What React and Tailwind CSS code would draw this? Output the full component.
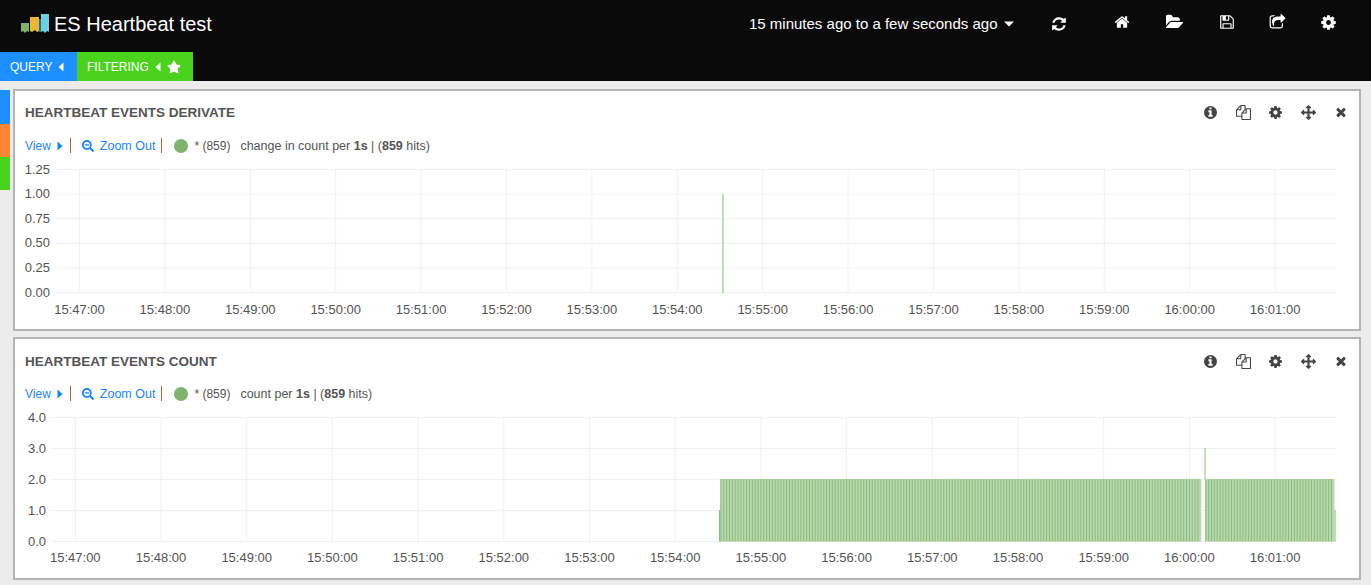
import React from "react";
import { FaSearchMinus, FaStar } from "react-icons/fa";

const XL = ["15:47:00","15:48:00","15:49:00","15:50:00","15:51:00","15:52:00","15:53:00","15:54:00","15:55:00","15:56:00","15:57:00","15:58:00","15:59:00","16:00:00","16:01:00"];

const P = {
  refresh: "M1639 1056q0 5-1 7-64 268-268 434.5t-478 166.5q-146 0-282.5-55t-243.5-157l-129 129q-19 19-45 19t-45-19-19-45v-448q0-26 19-45t45-19h448q26 0 45 19t19 45-19 45l-137 137q71 66 161 102t187 36q134 0 250-65t186-179q11-17 53-117 8-23 30-23h192q13 0 22.5 9.5t9.5 22.5zm25-800v448q0 26-19 45t-45 19h-448q-26 0-45-19t-19-45 19-45l138-138q-148-137-349-137-134 0-250 65t-186 179q-11 17-53 117-8 23-30 23h-199q-13 0-22.5-9.5t-9.5-22.5v-7q65-268 270-434.5t480-166.5q146 0 284 55.5t245 156.5l130-129q19-19 45-19t45 19 19 45z",
  arrows: "M1792 896q0 26-19 45l-256 256q-19 19-45 19t-45-19-19-45v-128h-384v384h128q26 0 45 19t19 45-19 45l-256 256q-19 19-45 19t-45-19l-256-256q-19-19-19-45t19-45 45-19h128v-384h-384v128q0 26-19 45t-45 19-45-19l-256-256q-19-19-19-45t19-45l256-256q19-19 45-19t45 19 19 45v128h384v-384h-128q-26 0-45-19t-19-45 19-45l256-256q19-19 45-19t45 19l256 256q19 19 19 45t-19 45-45 19h-128v384h384v-128q0-26 19-45t45-19 45 19l256 256q19 19 19 45z",
  cog: "M1152 896q0-106-75-181t-181-75-181 75-75 181 75 181 181 75 181-75 75-181zm512-109v222q0 12-8 23t-20 13l-185 28q-19 54-39 91 35 50 107 138 10 12 10 25t-9 23q-27 37-99 108t-94 71q-12 0-26-9l-138-108q-44 23-91 38-16 136-29 186-7 28-36 28h-222q-14 0-24.5-8.5t-11.5-21.5l-28-184q-49-16-90-37l-141 107q-10 9-25 9-14 0-25-11-126-114-165-168-7-10-7-23 0-12 8-23 15-21 51-66.5t54-70.5q-27-50-41-99l-183-27q-13-2-21-12.5t-8-23.5v-222q0-12 8-23t19-13l186-28q14-46 39-92-40-57-107-138-10-12-10-24 0-10 9-23 26-36 98.5-107.5t94.5-71.5q13 0 26 10l138 107q44-23 91-38 16-136 29-186 7-28 36-28h222q14 0 24.5 8.5t11.5 21.5l28 184q49 16 90 37l142-107q9-9 24-9 13 0 25 10 129 119 165 170 7 8 7 22 0 12-8 23-15 21-51 66.5t-54 70.5q26 50 41 98l183 28q13 2 21 12.5t8 23.5z",
  save: "M512 1536h768v-384h-768v384zm896 0h128v-896q0-14-10-38.5t-20-34.5l-281-281q-10-10-34-20t-39-10v416q0 40-28 68t-68 28h-576q-40 0-68-28t-28-68v-416h-128v1280h128v-416q0-40 28-68t68-28h832q40 0 68 28t28 68v416zm-384-928v-320q0-13-9.5-22.5t-22.5-9.5h-192q-13 0-22.5 9.5t-9.5 22.5v320q0 13 9.5 22.5t22.5 9.5h192q13 0 22.5-9.5t9.5-22.5zm640 32v928q0 40-28 68t-68 28h-1344q-40 0-68-28t-28-68v-1344q0-40 28-68t68-28h928q40 0 88 20t76 48l280 280q28 28 48 76t20 88z",
  home: "M1472 992v480q0 26-19 45t-45 19h-384v-384h-256v384h-384q-26 0-45-19t-19-45v-480q0-1 .5-3t.5-3l575-474 575 474q1 2 1 6zm223-69l-62 74q-8 9-21 11h-3q-13 0-21-7l-692-577-692 577q-12 8-24 7-13-2-21-11l-62-74q-8-10-7-23.5t11-21.5l719-599q32-26 76-26t76 26l244 204v-195q0-14 9-23t23-9h192q14 0 23 9t9 23v408l219 182q10 8 11 21.5t-7 23.5z",
  folder: "M1815 952q0 31-31 66l-336 396q-43 51-120.5 86.5t-143.5 35.5h-1088q-34 0-60.5-13t-26.5-43q0-31 31-66l336-396q43-51 120.5-86.5t143.5-35.5h1088q34 0 60.5 13t26.5 43zm-343-344v160h-832q-94 0-197 47.5t-164 119.5l-337 396-5 6q0-4-.5-12.5t-.5-12.5v-960q0-92 66-158t158-66h320q92 0 158 66t66 158v32h544q92 0 158 66t66 158z",
  share: "M1472 989v259q0 119-84.5 203.5t-203.5 84.5h-832q-119 0-203.5-84.5t-84.5-203.5v-832q0-119 84.5-203.5t203.5-84.5h255q13 0 22.5 9.5t9.5 22.5q0 27-26 32-77 26-133 60-10 4-16 4h-112q-66 0-113 47t-47 113v832q0 66 47 113t113 47h832q66 0 113-47t47-113v-214q0-19 18-29 28-13 54-37 16-16 35-8 21 9 21 29zm237-496l-384 384q-18 19-45 19-12 0-25-5-39-17-39-59v-192h-160q-323 0-438 131-119 137-74 473 3 23-20 34-8 2-12 2-16 0-26-13-10-14-21-31t-39.5-68.5-49.5-99.5-38.5-114-17.5-122q0-49 3.5-91t14-90 28-88 47-81.5 68.5-74 94.5-61.5 124.5-48.5 159.5-30.5 196.5-11h160v-192q0-42 39-59 13-5 25-5 26 0 45 19l384 384q19 19 19 45t-19 45z",
  files: "M1696 384q40 0 68 28t28 68v1216q0 40-28 68t-68 28h-960q-40 0-68-28t-28-68v-288h-544q-40 0-68-28t-28-68v-672q0-40 20-88t48-76l408-408q28-28 76-48t88-20h416q40 0 68 28t28 68v328q68-40 128-40h416zm-544 213l-299 299h299v-299zm-640-384l-299 299h299v-299zm196 647l316-316v-416h-384v416q0 40-28 68t-68 28h-416v640h512v-256q0-40 20-88t48-76zm956 804v-1152h-384v416q0 40-28 68t-68 28h-416v640h896z",
  info: "M1152 1376v-160q0-14-9-23t-23-9h-96v-512q0-14-9-23t-23-9h-320q-14 0-23 9t-9 23v160q0 14 9 23t23 9h96v320h-96q-14 0-23 9t-9 23v160q0 14 9 23t23 9h448q14 0 23-9t9-23zm-128-896v-160q0-14-9-23t-23-9h-192q-14 0-23 9t-9 23v160q0 14 9 23t23 9h192q14 0 23-9t9-23zm640 416q0 209-103 385.5t-279.5 279.5-385.5 103-385.5-103-279.5-279.5-103-385.5 103-385.5 279.5-279.5 385.5-103 385.5 103 279.5 279.5 103 385.5z",
  times: "M1490 1322q0 40-28 68l-136 136q-28 28-68 28t-68-28l-294-294-294 294q-28 28-68 28t-68-28l-136-136q-28-28-28-68t28-68l294-294-294-294q-28-28-28-68t28-68l136-136q28-28 68-28t68 28l294 294 294-294q28-28 68-28t68 28l136 136q28 28 28 68t-28 68l-294 294 294 294q28 28 28 68z",
};

function Fa({ name, size, vb = "0 0 1792 1792", className }) {
  return (
    <svg width={size} height={size} viewBox={vb} fill="currentColor" className={className}>
      <path d={P[name]} />
    </svg>
  );
}

function CaretLeft({ className }) {
  return <svg width="6" height="10" viewBox="0 0 6 10" fill="currentColor" className={className}><path d="M5.5 0.5v9L0.5 5z" /></svg>;
}
function CaretRight({ className }) {
  return <svg width="6" height="10" viewBox="0 0 6 10" fill="currentColor" className={className}><path d="M0.5 0.5v9L5.5 5z" /></svg>;
}
function CaretDown({ className }) {
  return <svg width="10" height="6" viewBox="0 0 10 6" fill="currentColor" className={className}><path d="M0 0.5h10L5 5.5z" /></svg>;
}

function Logo() {
  return (
    <svg width="28" height="20" viewBox="0 0 28 20" className="shrink-0">
      <path d="M0 9h8v9l-2-1-2 2-2-2-2 1z" fill="#7eb26d" />
      <path d="M9 3h9v14l-2 1-2-2-3 2-2-1z" fill="#eab839" />
      <path d="M18 5h2v13h-2z" fill="#2f6f7c" />
      <path d="M20 0h8v18l-2-1-2 2-2-2-2 1z" fill="#6ed0e0" />
    </svg>
  );
}

function Chart({ top, height, yTicks, y0, yStep, xStart, xStep, xMin, xMax, labelY, children }) {
  return (
    <svg width="1344" height={height} viewBox={`15 ${top} 1344 ${height}`} className="block mt-[2px]">
      {yTicks.map((t, i) => (
        <g key={t}>
          <line x1={xMin} x2={xMax} y1={y0 + i * yStep} y2={y0 + i * yStep} stroke="#f1f1f1" strokeWidth="1" />
          <text x={xMin - 6} y={y0 + i * yStep + 4} textAnchor="end" fontSize="13" fill="#545454" fontFamily="Liberation Sans, sans-serif">{t}</text>
        </g>
      ))}
      {XL.map((t, i) => (
        <g key={t}>
          <line x1={xStart + i * xStep} x2={xStart + i * xStep} y1={y0} y2={y0 + (yTicks.length - 1) * yStep} stroke="#f1f1f1" strokeWidth="1" />
          <text x={xStart + i * xStep} y={labelY} textAnchor="middle" fontSize="13" fill="#545454" fontFamily="Liberation Sans, sans-serif">{t}</text>
        </g>
      ))}
      {children}
    </svg>
  );
}

function Panel({ title, legend, headerClass, children }) {
  return (
    <section className="border-2 border-[#b4b4b4] bg-white">
      <div className={headerClass}>
        <h2 className="mt-[2px] text-[13.5px] font-bold text-[#555555]">{title}</h2>
        <div className="ml-auto flex items-center text-[#444444]">
          <span className="w-[32.5px] flex justify-center"><Fa name="info" size={15} /></span>
          <span className="w-[32.5px] flex justify-center"><Fa name="files" size={15} /></span>
          <span className="w-[32.5px] flex justify-center"><Fa name="cog" size={15} /></span>
          <span className="w-[32.5px] flex justify-center"><Fa name="arrows" size={15} /></span>
          <span className="w-[32.5px] flex justify-center"><Fa name="times" size={14} /></span>
        </div>
      </div>
      <div className="flex items-center h-[25px] pl-[10px] text-[12.5px] text-[#555555]">
        <span className="text-[12px] text-[#1a85f0]">View</span>
        <CaretRight className="text-[#1a85f0] ml-[6px]" />
        <span className="w-px h-[15px] bg-[#a5614a] ml-[7px]" />
        <FaSearchMinus size={12} className="text-[#1a85f0] ml-[11px]" />
        <span className="mt-[1px] text-[#1a85f0] ml-[6px]">Zoom Out</span>
        <span className="w-px h-[15px] bg-[#a5614a] ml-[6px]" />
        <span className="w-[14px] h-[14px] rounded-full bg-[#7eb26d] ml-[12px]" />
        <span className="text-[12px] ml-[6px]">* (859)</span>
        <span className="mt-[1px] ml-[10px]">{legend} <b>1s</b> | (<b>859</b> hits)</span>
      </div>
      {children}
    </section>
  );
}

function Bars() {
  const stripes = [];
  const step = 2.8566;
  const bases = [
    [720.4, 1201.2],
    [1205.3, 1334.4],
  ];
  const out = [];
  bases.forEach(([a, b], j) => {
    out.push(<rect key={"b" + j} x={a} y="479" width={b - a} height="62.5" fill="#b8d8ad" />);
    for (let x = a; x < b - 1; x += step) {
      stripes.push(<rect key={x} x={x} y="479" width="1" height="62.5" fill="#8cbb7d" />);
    }
  });
  return (
    <g>
      {out}
      {stripes}
      <rect x="1204.4" y="448" width="1.3" height="31" fill="#a6cf98" />
      <rect x="719" y="510" width="1.4" height="31.5" fill="#8cbb7d" />
      <rect x="1334.4" y="510" width="1.3" height="31.5" fill="#a6cf98" />
    </g>
  );
}

export default function App() {
  return (
    <div className="min-h-[585px] bg-[#ececec] font-['Liberation_Sans',sans-serif]">
      <header className="bg-[#0a0a0a] h-[81px] text-white">
        <div className="flex items-center h-[52px]">
          <div className="flex items-center pl-[21px] mb-[4px]">
            <Logo />
            <span className="text-[20px] ml-[5px]">ES Heartbeat test</span>
          </div>
          <div className="ml-auto flex items-center">
            <div className="flex items-center mb-[4px]">
              <span className="text-[15px]">15 minutes ago to a few seconds ago</span>
              <CaretDown className="ml-[6px]" />
            </div>
            <Fa name="refresh" size={16} className="ml-[37px] mb-[4px]" />
            <div className="flex items-center mb-[8px] ml-[30px] pr-[17px]">
              <span className="w-[51.5px] flex justify-center"><Fa name="home" size={16} /></span>
              <span className="w-[51.5px] flex justify-center"><Fa name="folder" size={18} vb="0 0 1920 1792" className="ml-[2px]" /></span>
              <span className="w-[51.5px] flex justify-center"><Fa name="save" size={16} className="ml-[3px]" /></span>
              <span className="w-[51.5px] flex justify-center"><Fa name="share" size={17} className="ml-[2px]" /></span>
              <span className="w-[51.5px] flex justify-center"><Fa name="cog" size={17} /></span>
            </div>
          </div>
        </div>
        <div className="flex h-[29px] text-[12px]">
          <div className="flex items-center w-[77px] pl-[10px] bg-[#1e8fff]">
            <span>QUERY</span>
            <CaretLeft className="ml-[6px]" />
          </div>
          <div className="flex items-center w-[116px] pl-[10px] bg-[#4bd21d]">
            <span>FILTERING</span>
            <CaretLeft className="ml-[6px]" />
            <FaStar size={14} className="ml-[6px]" />
          </div>
        </div>
      </header>
      <div className="flex">
        <aside className="w-[10px] mt-[9px] shrink-0">
          <div className="h-[34px] bg-[#1e8fff]" />
          <div className="h-[33px] bg-[#ff8533]" />
          <div className="h-[33px] bg-[#4bd21d]" />
        </aside>
        <main className="flex-1 ml-[3px] mr-[10px] mt-[8px] flex flex-col gap-[6px]">
          <Panel title="HEARTBEAT EVENTS DERIVATE" legend="change in count per" headerClass="flex items-center h-[42px] pl-[10px] pr-[2px]">
            <Chart top={160} height={169} yTicks={["1.25","1.00","0.75","0.50","0.25","0.00"]} y0={169.5} yStep={24.6} xStart={79.5} xStep={85.4} xMin={56} xMax={1336} labelY={314}>
              <rect x="722.3" y="194" width="1.4" height="99" fill="#a6cf98" />
            </Chart>
          </Panel>
          <Panel title="HEARTBEAT EVENTS COUNT" legend="count per" headerClass="flex items-center h-[42px] pt-[2px] pl-[10px] pr-[2px]">
            <Chart top={408} height={170} yTicks={["4.0","3.0","2.0","1.0","0.0"]} y0={417.5} yStep={31} xStart={75.3} xStep={85.7} xMin={52} xMax={1336} labelY={562}>
              <Bars />
            </Chart>
          </Panel>
        </main>
      </div>
    </div>
  );
}
